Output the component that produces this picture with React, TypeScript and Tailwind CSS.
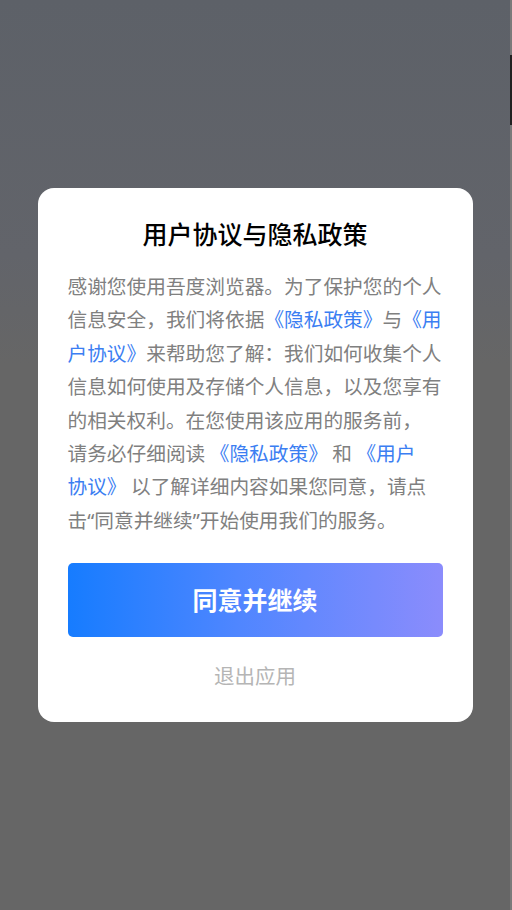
const FONT = { fontFamily: '"Noto Sans CJK SC", "Noto Sans", sans-serif' }

function Link({ children }: { children: string }) {
  return <span className="text-[#3b7ef2]">{children}</span>
}

// Latin-width curly quotes, as in the reference
function Q({ children }: { children: string }) {
  return <span style={{ fontFamily: '"Noto Sans", sans-serif' }}>{children}</span>
}

export default function App() {
  return (
    <div className="flex h-[910px] w-[512px] overflow-hidden" style={FONT}>
      <div className="flex flex-1 items-center justify-center bg-[linear-gradient(180deg,#5d6168_0%,#62646a_28%,#666666_40%,#666666_100%)]">
        <div className="flex w-[435px] flex-col rounded-[16px] bg-white px-[30px] pb-[32px] pt-[28px]">
          <h1 className="text-center text-[25px] leading-[35px] font-medium text-black">
            用户协议与隐私政策
          </h1>
          <p className="mt-[18px] text-[19.7px] leading-[33.4px] whitespace-nowrap text-[#808080]">
            感谢您使用吾度浏览器。为了保护您的个人
            <br />
            信息安全，我们将依据<Link>《隐私政策》</Link>与<Link>《用</Link>
            <br />
            <Link>户协议》</Link>来帮助您了解：我们如何收集个人
            <br />
            信息如何使用及存储个人信息，以及您享有
            <br />
            的相关权利。在您使用该应用的服务前，
            <br />
            请务必仔细阅读 <Link>《隐私政策》</Link> 和 <Link>《用户</Link>
            <br />
            <Link>协议》</Link> 以了解详细内容如果您同意，请点
            <br />
            击<Q>“</Q>同意并继续<Q>”</Q>开始使用我们的服务。
          </p>
          <button className="mt-[26px] h-[74px] w-full rounded-[5px] bg-[linear-gradient(90deg,#167cff_0%,#4f86ff_45%,#8b8cfc_100%)] text-[25px] font-semibold text-white">
            同意并继续
          </button>
          <button className="mt-[23px] h-[30px] text-center text-[20.5px] leading-[30px] text-[#b5b5b5]">
            退出应用
          </button>
        </div>
      </div>
      <div className="flex w-[2px] flex-col bg-[#7a7a7a]">
        <div className="mt-[55px] h-[70px] bg-[#222]" />
      </div>
    </div>
  )
}
